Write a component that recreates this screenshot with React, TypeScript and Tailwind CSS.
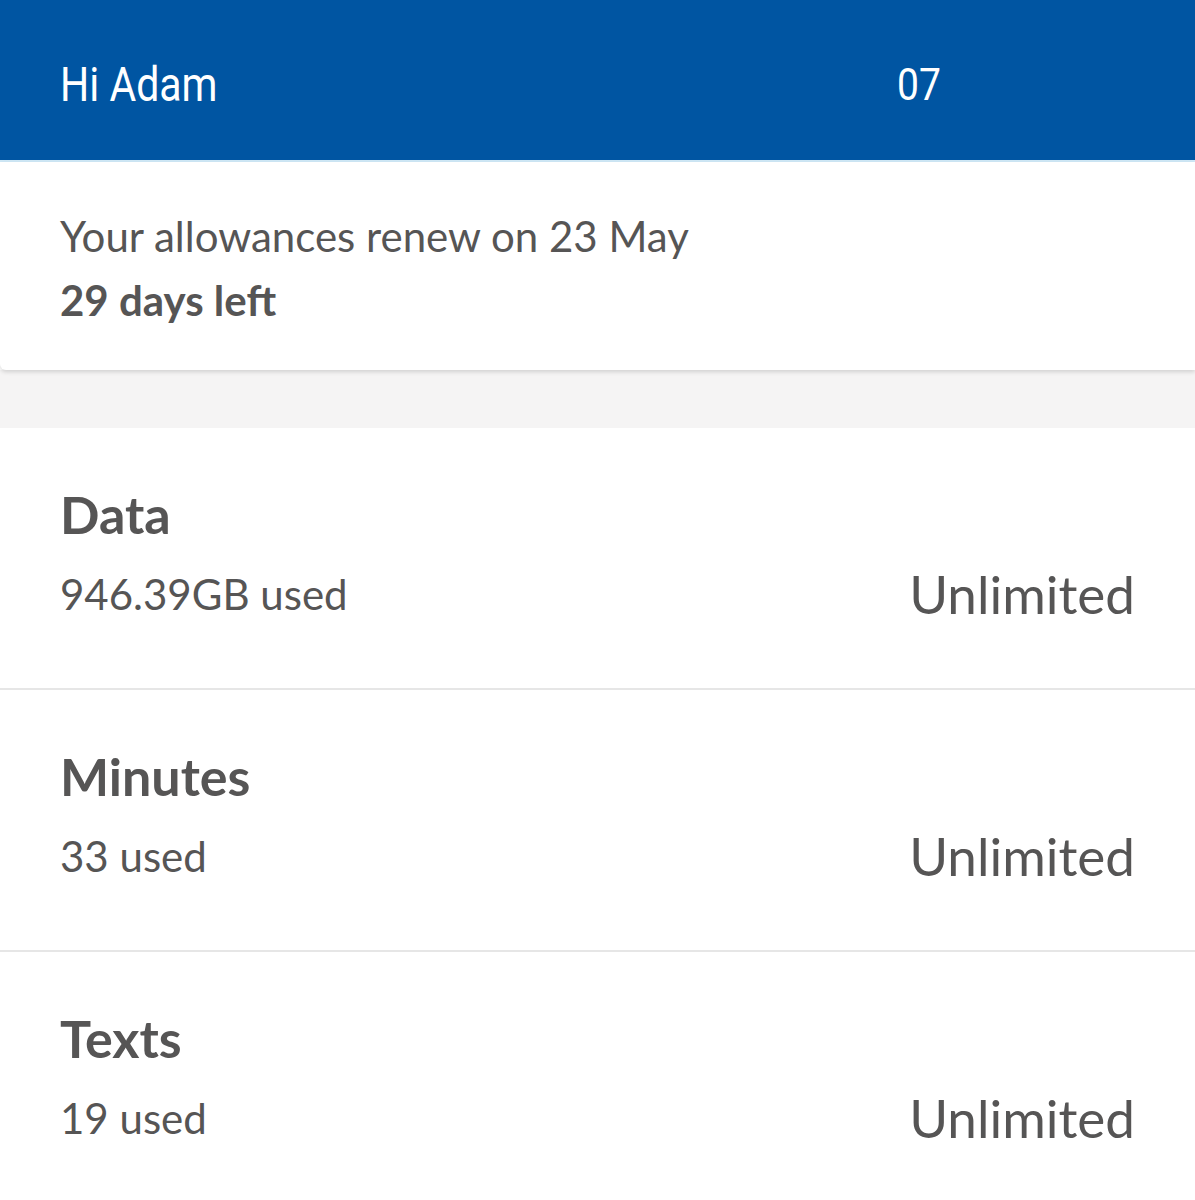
import * as React from 'react';

const rows = [
    { title: 'Data', used: '946.39GB used' },
    { title: 'Minutes', used: '33 used' },
    { title: 'Texts', used: '19 used' },
];

const App: React.FC = () => {
    return (
        <div className="w-[1195px] h-[1200px] overflow-hidden bg-white text-[#565555]" style={{ fontFamily: 'Lato, "Noto Sans", sans-serif' }}>
            {/* Header */}
            <div className="h-[162px] bg-[#0055a2] flex items-center pl-[60px] text-white border-b-2 border-[#cfe8f6]" style={{ fontFamily: 'Roboto, sans-serif' }}>
                <span className="inline-block text-[41px] leading-none scale-y-[1.15] w-[837px] mt-[10px]">Hi Adam</span>
                <span className="inline-block text-[39px] leading-none scale-y-[1.15] mt-[10px]">07</span>
            </div>

            {/* Renewal card */}
            <div className="h-[208px] bg-white rounded-bl-md shadow-[0_2px_4px_rgba(0,0,0,0.15)] pl-[60px] pt-[48px] relative">
                <p className="text-[42px] leading-[52px]">Your allowances renew on 23 May</p>
                <p className="text-[42px] leading-[52px] font-bold mt-[12px]">29 days left</p>
            </div>

            <div className="h-[58px] bg-[#f5f4f4]" />

            {/* Allowances */}
            <div className="bg-white">
                {rows.map((row, i) => (
                    <div key={row.title} className={`h-[262px] pl-[60px] pr-[60px] pt-[56px] ${i < rows.length - 1 ? 'border-b-2 border-[#e6e6e6]' : ''}`}>
                        <p className="text-[52px] leading-[60px] font-bold">{row.title}</p>
                        <div className="flex items-center justify-between mt-[20px]">
                            <span className="text-[42px] leading-[52px]">{row.used}</span>
                            <span className="text-[53px] leading-[60px]">Unlimited</span>
                        </div>
                    </div>
                ))}
            </div>
        </div>
    );
};

export default App;
